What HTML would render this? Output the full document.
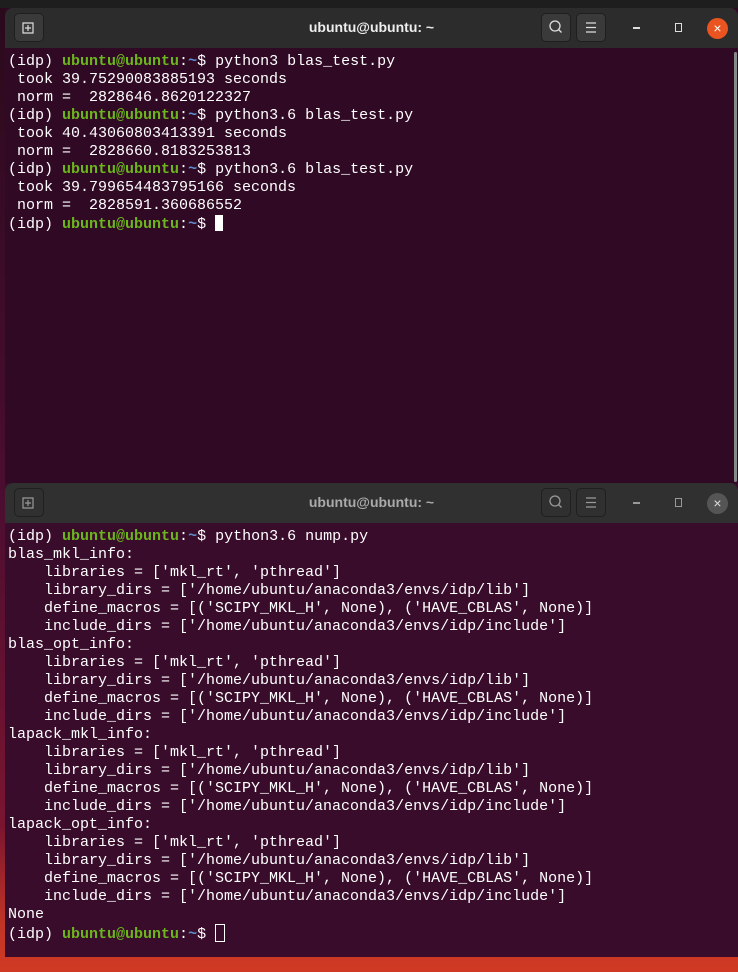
<!DOCTYPE html>
<html><head><style>
body{margin:0;width:738px;height:972px;overflow:hidden;background:linear-gradient(180deg,#2a0a1c 0%,#4a0d30 50%,#7a1530 85%,#c03426 95%,#d03a24 100%);position:relative;font-family:"Liberation Mono",monospace}
.top{position:absolute;left:0;top:0;width:738px;height:8px;background:#1e1e1e}
.win{position:absolute;left:5px;width:733px;background:#300a24}
.tb{position:absolute;left:0;top:0;width:100%;height:40px;background:#2c2c2c;border-radius:8px 8px 0 0}
.tb .t{position:absolute;left:0;width:100%;text-align:center;top:11px;font:bold 14px "Liberation Sans",sans-serif;color:#eee}
.btn{position:absolute;top:5px;width:30px;height:29px;border-radius:5px;background:#3a3a3a;border:1px solid #1f1f1f;box-sizing:border-box}
.term{position:absolute;left:3px;top:45px;color:#fff;font-size:15px;line-height:18px;white-space:pre}
.g{color:#6bb61c;font-weight:bold}.b{color:#5c8fd0;font-weight:bold}
.cur{display:inline-block;width:8px;height:16px;vertical-align:-3px}
</style></head><body>
<div class="top"></div>
<div class="win" style="top:8px;height:476px">
 <div class="tb"><div class="t">ubuntu@ubuntu: ~</div>
  <div class="btn" style="left:9px"><svg width="28" height="27"><path d="M8 9h10v10H8zM13 11v6M10 14h6" stroke="#ddd" fill="none" stroke-width="1.2"/></svg></div>
  <div class="btn" style="left:536px"><svg width="28" height="27"><circle cx="13" cy="12" r="5" stroke="#ddd" fill="none" stroke-width="1.3"/><path d="M16.5 15.5l3 3" stroke="#ddd" stroke-width="1.3"/></svg></div>
  <div class="btn" style="left:571px"><svg width="28" height="27"><path d="M9 9h10M9 13.5h10M9 18h10" stroke="#ddd" stroke-width="1.3"/></svg></div>
  <div style="position:absolute;left:628px;top:19px;width:7px;height:1.5px;background:#ddd"></div>
  <div style="position:absolute;left:670px;top:15px;width:7px;height:9px;border:1.3px solid #ddd;box-sizing:border-box"></div>
  <div style="position:absolute;left:702px;top:10px;width:21px;height:21px;border-radius:50%;background:#e95420;color:#fff;font:14px 'Liberation Sans';text-align:center;line-height:20px">×</div>
 </div>
 <div style="position:absolute;right:1px;top:44px;width:3px;height:430px;background:#888;border-radius:2px"></div>
 <div class="term">(idp) <span class="g">ubuntu@ubuntu</span>:<span class="b">~</span>$ python3 blas_test.py
 took 39.75290083885193 seconds
 norm =  2828646.8620122327
(idp) <span class="g">ubuntu@ubuntu</span>:<span class="b">~</span>$ python3.6 blas_test.py
 took 40.43060803413391 seconds
 norm =  2828660.8183253813
(idp) <span class="g">ubuntu@ubuntu</span>:<span class="b">~</span>$ python3.6 blas_test.py
 took 39.799654483795166 seconds
 norm =  2828591.360686552
(idp) <span class="g">ubuntu@ubuntu</span>:<span class="b">~</span>$ <span class="cur" style="background:#fff"></span></div>
</div>
<div class="win" style="top:483px;height:474px;background:#380c2a">
 <div class="tb" style="background:#303030"><div class="t" style="color:#aaa">ubuntu@ubuntu: ~</div>
  <div class="btn" style="left:9px;background:#303030"><svg width="28" height="27"><path d="M8 9h10v10H8zM13 11v6M10 14h6" stroke="#999" fill="none" stroke-width="1.2"/></svg></div>
  <div class="btn" style="left:536px;background:#303030"><svg width="28" height="27"><circle cx="13" cy="12" r="5" stroke="#999" fill="none" stroke-width="1.3"/><path d="M16.5 15.5l3 3" stroke="#999" stroke-width="1.3"/></svg></div>
  <div class="btn" style="left:571px;background:#303030"><svg width="28" height="27"><path d="M9 9h10M9 13.5h10M9 18h10" stroke="#999" stroke-width="1.3"/></svg></div>
  <div style="position:absolute;left:628px;top:19px;width:7px;height:1.5px;background:#999"></div>
  <div style="position:absolute;left:670px;top:15px;width:7px;height:9px;border:1.3px solid #999;box-sizing:border-box"></div>
  <div style="position:absolute;left:702px;top:10px;width:21px;height:21px;border-radius:50%;background:#555;color:#ddd;font:14px 'Liberation Sans';text-align:center;line-height:20px">×</div>
 </div>
 <div class="term" style="top:45px">(idp) <span class="g">ubuntu@ubuntu</span>:<span class="b">~</span>$ python3.6 nump.py
blas_mkl_info:
    libraries = ['mkl_rt', 'pthread']
    library_dirs = ['/home/ubuntu/anaconda3/envs/idp/lib']
    define_macros = [('SCIPY_MKL_H', None), ('HAVE_CBLAS', None)]
    include_dirs = ['/home/ubuntu/anaconda3/envs/idp/include']
blas_opt_info:
    libraries = ['mkl_rt', 'pthread']
    library_dirs = ['/home/ubuntu/anaconda3/envs/idp/lib']
    define_macros = [('SCIPY_MKL_H', None), ('HAVE_CBLAS', None)]
    include_dirs = ['/home/ubuntu/anaconda3/envs/idp/include']
lapack_mkl_info:
    libraries = ['mkl_rt', 'pthread']
    library_dirs = ['/home/ubuntu/anaconda3/envs/idp/lib']
    define_macros = [('SCIPY_MKL_H', None), ('HAVE_CBLAS', None)]
    include_dirs = ['/home/ubuntu/anaconda3/envs/idp/include']
lapack_opt_info:
    libraries = ['mkl_rt', 'pthread']
    library_dirs = ['/home/ubuntu/anaconda3/envs/idp/lib']
    define_macros = [('SCIPY_MKL_H', None), ('HAVE_CBLAS', None)]
    include_dirs = ['/home/ubuntu/anaconda3/envs/idp/include']
None
(idp) <span class="g">ubuntu@ubuntu</span>:<span class="b">~</span>$ <span class="cur" style="border:1px solid #fff;box-sizing:border-box;height:18px;width:10px;vertical-align:-4px"></span></div>
</div>
</body></html>
